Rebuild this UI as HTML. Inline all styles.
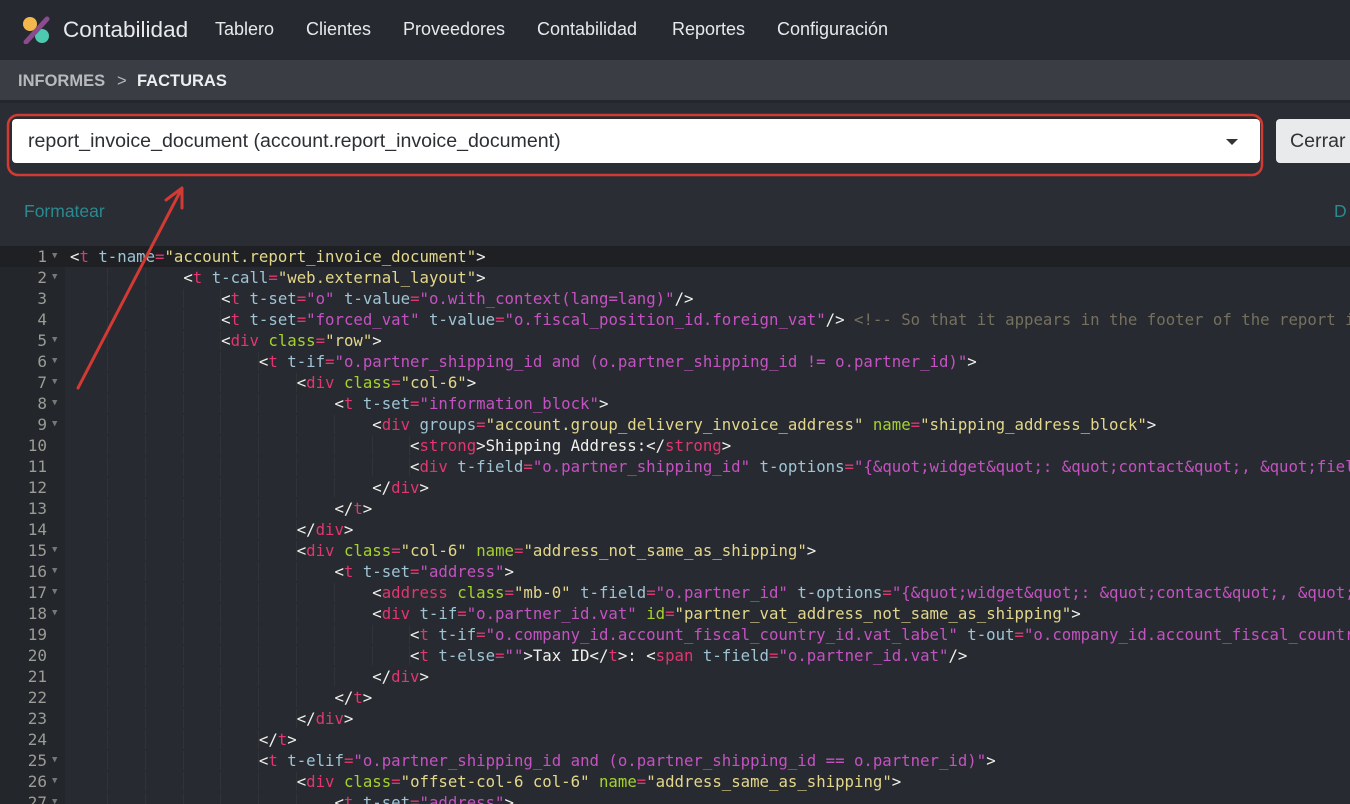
<!DOCTYPE html>
<html><head><meta charset="utf-8"><style>
*{margin:0;padding:0;box-sizing:border-box}
body{width:1350px;height:804px;overflow:hidden;background:#2a2d33;font-family:"Liberation Sans",sans-serif;position:relative}
.nav{position:absolute;left:0;top:0;width:1350px;height:60px;background:#262a30}
.nav span{position:absolute;top:19px;color:#e8e9eb;font-size:18px}
.bc{position:absolute;left:0;top:60px;width:1350px;height:43px;background:#3a3d44;border-bottom:3px solid #24272b}
.bc span{position:absolute;top:12px;font-size:16.5px;font-weight:bold}
.inp{position:absolute;left:12px;top:119px;width:1248px;height:44px;background:#fff;border-radius:4px;color:#2c2f33;font-size:19.6px;padding:11px 0 0 16px}
.caret{position:absolute;right:22px;top:20px;width:0;height:0;border-left:6px solid transparent;border-right:6px solid transparent;border-top:6px solid #333}
.btn{position:absolute;left:1276px;top:119px;width:90px;height:44px;background:#e9eaec;border-radius:4px;color:#333;font-size:19.6px;padding:11px 0 0 14px}
.fmt{position:absolute;left:24px;top:201px;color:#2a8a8f;font-size:17.5px}
.code{position:absolute;left:0;top:246px;width:1350px;height:558px;background:#272a30;overflow:hidden}
.gut{position:absolute;left:0;top:0;width:65px;height:558px;background:#23262b}
.ln{position:absolute;left:0;height:21px;width:1350px;font-family:"DejaVu Sans Mono","Liberation Mono",monospace;font-size:15.7px;line-height:21px;white-space:pre;color:#f1f1ec}
.ln .n{position:absolute;left:0;width:47px;text-align:right;color:#9a9c95;font-size:16px}
.ln .f{position:absolute;left:52px;color:#777;font-size:9px}
.ln .c{position:absolute;left:70px;top:0}
.ind{background-image:repeating-linear-gradient(90deg,transparent 0,transparent 37.3px,#3a3d42 37.3px,#3a3d42 37.8px)}
.t{color:#e23670}.a{color:#9fc4d4}.g{color:#a6d22e}.y{color:#e3d78a}.m{color:#c552c2}.cm{color:#75715e}.e{color:#e23670}
</style></head><body>
<div class="nav">
<svg style="position:absolute;left:22px;top:16px" width="28" height="28" viewBox="0 0 28 28"><circle cx="8" cy="8" r="7" fill="#f2b84b"/><circle cx="20" cy="20" r="7" fill="#4cc9ae"/><line x1="4" y1="26" x2="25" y2="3" stroke="#8a4c8d" stroke-width="5" stroke-linecap="round"/></svg>
<span style="left:63px;top:17px;font-size:22.5px">Contabilidad</span>
<span style="left:215px">Tablero</span><span style="left:306px">Clientes</span><span style="left:403px">Proveedores</span><span style="left:537px">Contabilidad</span><span style="left:672px">Reportes</span><span style="left:777px">Configuración</span>
</div>
<div class="bc"><span style="left:18px;color:#b8babd">INFORMES</span><span style="left:117px;color:#b8babd;font-weight:normal">&gt;</span><span style="left:137px;color:#eceef0">FACTURAS</span></div>
<div class="inp">report_invoice_document (account.report_invoice_document)<div class="caret"></div></div>
<div class="btn">Cerrar</div>
<div class="fmt">Formatear</div>
<div style="position:absolute;left:1334px;top:201px;color:#2a8a8f;font-size:17.5px">D</div>
<div class="code"><div class="gut"></div>
<div class="ln" style="top:0;background:#1e2024"><span class="n">1</span><span class="f">▼</span><span class="c">&lt;<span class="t">t</span> <span class="a">t-name</span><span class="e">=</span><span class="y">"account.report_invoice_document"</span>&gt;</span></div>
<div class="ln" style="top:21px"><span class="n">2</span><span class="f">▼</span><span class="c"><span class="ind">            </span>&lt;<span class="t">t</span> <span class="a">t-call</span><span class="e">=</span><span class="y">"web.external_layout"</span>&gt;</span></div>
<div class="ln" style="top:42px"><span class="n">3</span><span class="c"><span class="ind">                </span>&lt;<span class="t">t</span> <span class="a">t-set</span><span class="e">=</span><span class="m">"o"</span> <span class="a">t-value</span><span class="e">=</span><span class="m">"o.with_context(lang=lang)"</span>/&gt;</span></div>
<div class="ln" style="top:63px"><span class="n">4</span><span class="c"><span class="ind">                </span>&lt;<span class="t">t</span> <span class="a">t-set</span><span class="e">=</span><span class="m">"forced_vat"</span> <span class="a">t-value</span><span class="e">=</span><span class="m">"o.fiscal_position_id.foreign_vat"</span>/&gt; <span class="cm">&lt;!-- So that it appears in the footer of the report instead of the company VAT --&gt;</span></span></div>
<div class="ln" style="top:84px"><span class="n">5</span><span class="f">▼</span><span class="c"><span class="ind">                </span>&lt;<span class="t">div</span> <span class="g">class</span><span class="e">=</span><span class="y">"row"</span>&gt;</span></div>
<div class="ln" style="top:105px"><span class="n">6</span><span class="f">▼</span><span class="c"><span class="ind">                    </span>&lt;<span class="t">t</span> <span class="a">t-if</span><span class="e">=</span><span class="m">"o.partner_shipping_id and (o.partner_shipping_id != o.partner_id)"</span>&gt;</span></div>
<div class="ln" style="top:126px"><span class="n">7</span><span class="f">▼</span><span class="c"><span class="ind">                        </span>&lt;<span class="t">div</span> <span class="g">class</span><span class="e">=</span><span class="y">"col-6"</span>&gt;</span></div>
<div class="ln" style="top:147px"><span class="n">8</span><span class="f">▼</span><span class="c"><span class="ind">                            </span>&lt;<span class="t">t</span> <span class="a">t-set</span><span class="e">=</span><span class="m">"information_block"</span>&gt;</span></div>
<div class="ln" style="top:168px"><span class="n">9</span><span class="f">▼</span><span class="c"><span class="ind">                                </span>&lt;<span class="t">div</span> <span class="a">groups</span><span class="e">=</span><span class="y">"account.group_delivery_invoice_address"</span> <span class="g">name</span><span class="e">=</span><span class="y">"shipping_address_block"</span>&gt;</span></div>
<div class="ln" style="top:189px"><span class="n">10</span><span class="c"><span class="ind">                                    </span>&lt;<span class="t">strong</span>&gt;Shipping Address:&lt;/<span class="t">strong</span>&gt;</span></div>
<div class="ln" style="top:210px"><span class="n">11</span><span class="c"><span class="ind">                                    </span>&lt;<span class="t">div</span> <span class="a">t-field</span><span class="e">=</span><span class="m">"o.partner_shipping_id"</span> <span class="a">t-options</span><span class="e">=</span><span class="m">"{&amp;quot;widget&amp;quot;: &amp;quot;contact&amp;quot;, &amp;quot;fields&amp;quot;</span></span></div>
<div class="ln" style="top:231px"><span class="n">12</span><span class="c"><span class="ind">                                </span>&lt;/<span class="t">div</span>&gt;</span></div>
<div class="ln" style="top:252px"><span class="n">13</span><span class="c"><span class="ind">                            </span>&lt;/<span class="t">t</span>&gt;</span></div>
<div class="ln" style="top:273px"><span class="n">14</span><span class="c"><span class="ind">                        </span>&lt;/<span class="t">div</span>&gt;</span></div>
<div class="ln" style="top:294px"><span class="n">15</span><span class="f">▼</span><span class="c"><span class="ind">                        </span>&lt;<span class="t">div</span> <span class="g">class</span><span class="e">=</span><span class="y">"col-6"</span> <span class="g">name</span><span class="e">=</span><span class="y">"address_not_same_as_shipping"</span>&gt;</span></div>
<div class="ln" style="top:315px"><span class="n">16</span><span class="f">▼</span><span class="c"><span class="ind">                            </span>&lt;<span class="t">t</span> <span class="a">t-set</span><span class="e">=</span><span class="m">"address"</span>&gt;</span></div>
<div class="ln" style="top:336px"><span class="n">17</span><span class="f">▼</span><span class="c"><span class="ind">                                </span>&lt;<span class="t">address</span> <span class="g">class</span><span class="e">=</span><span class="y">"mb-0"</span> <span class="a">t-field</span><span class="e">=</span><span class="m">"o.partner_id"</span> <span class="a">t-options</span><span class="e">=</span><span class="m">"{&amp;quot;widget&amp;quot;: &amp;quot;contact&amp;quot;, &amp;quot;fields</span></span></div>
<div class="ln" style="top:357px"><span class="n">18</span><span class="f">▼</span><span class="c"><span class="ind">                                </span>&lt;<span class="t">div</span> <span class="a">t-if</span><span class="e">=</span><span class="m">"o.partner_id.vat"</span> <span class="g">id</span><span class="e">=</span><span class="y">"partner_vat_address_not_same_as_shipping"</span>&gt;</span></div>
<div class="ln" style="top:378px"><span class="n">19</span><span class="c"><span class="ind">                                    </span>&lt;<span class="t">t</span> <span class="a">t-if</span><span class="e">=</span><span class="m">"o.company_id.account_fiscal_country_id.vat_label"</span> <span class="a">t-out</span><span class="e">=</span><span class="m">"o.company_id.account_fiscal_country_id.vat_label"</span>/&gt;</span></div>
<div class="ln" style="top:399px"><span class="n">20</span><span class="c"><span class="ind">                                    </span>&lt;<span class="t">t</span> <span class="a">t-else</span><span class="e">=</span><span class="m">""</span>&gt;Tax ID&lt;/<span class="t">t</span>&gt;: &lt;<span class="t">span</span> <span class="a">t-field</span><span class="e">=</span><span class="m">"o.partner_id.vat"</span>/&gt;</span></div>
<div class="ln" style="top:420px"><span class="n">21</span><span class="c"><span class="ind">                                </span>&lt;/<span class="t">div</span>&gt;</span></div>
<div class="ln" style="top:441px"><span class="n">22</span><span class="c"><span class="ind">                            </span>&lt;/<span class="t">t</span>&gt;</span></div>
<div class="ln" style="top:462px"><span class="n">23</span><span class="c"><span class="ind">                        </span>&lt;/<span class="t">div</span>&gt;</span></div>
<div class="ln" style="top:483px"><span class="n">24</span><span class="c"><span class="ind">                    </span>&lt;/<span class="t">t</span>&gt;</span></div>
<div class="ln" style="top:504px"><span class="n">25</span><span class="f">▼</span><span class="c"><span class="ind">                    </span>&lt;<span class="t">t</span> <span class="a">t-elif</span><span class="e">=</span><span class="m">"o.partner_shipping_id and (o.partner_shipping_id == o.partner_id)"</span>&gt;</span></div>
<div class="ln" style="top:525px"><span class="n">26</span><span class="f">▼</span><span class="c"><span class="ind">                        </span>&lt;<span class="t">div</span> <span class="g">class</span><span class="e">=</span><span class="y">"offset-col-6 col-6"</span> <span class="g">name</span><span class="e">=</span><span class="y">"address_same_as_shipping"</span>&gt;</span></div>
<div class="ln" style="top:546px"><span class="n">27</span><span class="f">▼</span><span class="c"><span class="ind">                            </span>&lt;<span class="t">t</span> <span class="a">t-set</span><span class="e">=</span><span class="m">"address"</span>&gt;</span></div>
</div>
<svg style="position:absolute;left:0;top:0" width="1350" height="804">
<rect x="8" y="115" width="1254" height="60" rx="10" fill="none" stroke="#d23a33" stroke-width="2.5"/>
<line x1="78" y1="388" x2="181" y2="190" stroke="#d23a33" stroke-width="3" stroke-linecap="round"/>
<polyline points="166,200 182,188 182,208" fill="none" stroke="#d23a33" stroke-width="3" stroke-linecap="round" stroke-linejoin="round"/>
</svg>
</body></html>
